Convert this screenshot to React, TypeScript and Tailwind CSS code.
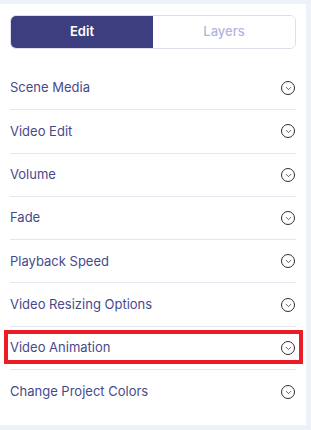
import { ChevronDown } from "lucide-react";

const sections = [
  "Scene Media",
  "Video Edit",
  "Volume",
  "Fade",
  "Playback Speed",
  "Video Resizing Options",
  "Video Animation",
  "Change Project Colors",
];

function CircleChevron() {
  return (
    <span className="flex h-[14px] w-[14px] items-center justify-center rounded-full border border-[#2e2e34]">
      <ChevronDown size={9} strokeWidth={2} className="mt-[1px] text-[#2e2e34]" />
    </span>
  );
}

export default function App() {
  return (
    <div
      className="h-[430px] w-[311px] bg-[#edf2f9] pt-[4px]"
      style={{ fontFamily: "Inter, 'Noto Sans', sans-serif" }}
    >
      <div className="h-[421px] w-[306px] bg-white px-[10px] pt-[11px]">
        <div className="flex h-[34px] w-[286px] overflow-hidden rounded-[6px] border border-[#dcdfe9]">
          <button className="flex flex-1 items-center justify-center bg-[#3c3e80] text-[13px] font-semibold text-white">
            Edit
          </button>
          <button className="flex flex-1 items-center justify-center bg-white text-[13px] font-medium text-[#b3b5de]">
            Layers
          </button>
        </div>

        <ul className="mt-[18px] w-[286px]">
          {sections.map((name, i) => (
            <li
              key={name}
              className={`relative flex h-[43.3px] items-center justify-between ${
                i < sections.length - 1 ? "border-b border-[#e4e7f1]" : ""
              }`}
            >
              <span className="text-[13px] text-[#464a8c]">{name}</span>
              <span className="mr-[1px]">
                <CircleChevron />
              </span>
              {name === "Video Animation" && (
                <span className="pointer-events-none absolute -left-[6px] -right-[7px] top-[3px] bottom-[5px] border-4 border-[#ec1c24]" />
              )}
            </li>
          ))}
        </ul>
      </div>
    </div>
  );
}
